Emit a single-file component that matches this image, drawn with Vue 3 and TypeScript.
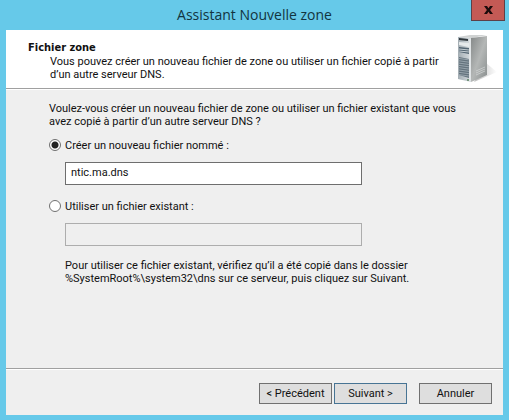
<script setup lang="ts">
import { ref } from 'vue'

type ZoneFileMode = 'new' | 'existing'

const mode = ref<ZoneFileMode>('new')
const newFile = ref<string>('ntic.ma.dns')
const existingFile = ref<string>('')
const vents: number[] = [0, 1, 2, 3, 4, 5, 6, 7]
</script>

<template>
  <main class="window">
    <header class="titlebar">
      <h1 class="title">Assistant Nouvelle zone</h1>
      <button class="close" type="button" aria-label="Fermer">
        <svg width="9" height="8" viewBox="0 0 9 8" aria-hidden="true">
          <path d="M0 0h3l1.5 2.3L6 0h3L6.1 4 9 8H6L4.5 5.7 3 8H0l2.9-4z" fill="#1d0b0b" />
        </svg>
      </button>
    </header>

    <form class="dialog" @submit.prevent>
      <section class="banner">
        <div class="heading">
          <h2>Fichier zone</h2>
          <p>Vous pouvez créer un nouveau fichier de zone ou utiliser un fichier copié à partir<br />d’un autre serveur DNS.</p>
        </div>
        <svg class="server" width="42" height="50" viewBox="0 0 42 50" aria-hidden="true">
          <defs>
            <linearGradient id="side" x1="0" y1="0" x2="1" y2="1">
              <stop offset="0" stop-color="#858989" />
              <stop offset="0.5" stop-color="#b4b7b6" />
              <stop offset="1" stop-color="#888d8d" />
            </linearGradient>
            <linearGradient id="front" x1="0" y1="0" x2="1" y2="0">
              <stop offset="0" stop-color="#a3adb3" />
              <stop offset="1" stop-color="#d7dde0" />
            </linearGradient>
            <linearGradient id="shade" x1="0" y1="0" x2="1" y2="0">
              <stop offset="0" stop-color="#bcbcbc" />
              <stop offset="1" stop-color="#ffffff" />
            </linearGradient>
          </defs>
          <path d="M29 29L40 38 17 48z" fill="url(#shade)" />
          <path d="M1 3L13 1h17L15 4z" fill="#cfd2d2" />
          <path d="M14 4L30 2v39L14 48z" fill="url(#side)" />
          <path d="M1 3l13 1v44L1 45z" fill="url(#front)" />
          <path d="M2 4l9 1v2L2 6z" fill="#30383d" />
          <path d="M2 8l10 1v4L2 11z" fill="#e6eaeb" />
          <path d="M2 13l10 1v6L2 18z" fill="#536572" />
          <path d="M2 15l10 1M2 17l10 1" stroke="#c5ced3" />
          <path d="M2 23l10 2v19L2 41z" fill="#64737d" />
          <path v-for="n in vents" :key="n" :d="`M2 ${24.5 + n * 2.3}l10 1.4`" stroke="#a3b0b8" stroke-width="0.8" />
          <path d="M13 5v42" stroke="#eef0f0" />
          <path d="M19 37l9-4M19 39l9-4M19 41l9-4" stroke="#d6d8d8" stroke-width="0.7" />
          <circle cx="11" cy="46" r="1" fill="#59815f" />
        </svg>
      </section>

      <section class="content">
        <p>Voulez-vous créer un nouveau fichier de zone ou utiliser un fichier existant que vous<br />avez copié à partir d’un autre serveur DNS ?</p>

        <label class="option">
          <input v-model="mode" type="radio" name="mode" value="new" />
          <span>Créer un nouveau fichier nommé :</span>
        </label>
        <input v-model="newFile" class="field" type="text" aria-label="Créer un nouveau fichier nommé" :disabled="mode !== 'new'" />

        <label class="option">
          <input v-model="mode" type="radio" name="mode" value="existing" />
          <span>Utiliser un fichier existant :</span>
        </label>
        <input v-model="existingFile" class="field" type="text" aria-label="Utiliser un fichier existant" :disabled="mode !== 'existing'" />

        <p class="note">Pour utiliser ce fichier existant, vérifiez qu’il a été copié dans le dossier<br />%SystemRoot%\system32\dns sur ce serveur, puis cliquez sur Suivant.</p>
      </section>

      <footer class="actions">
        <button type="button">&lt; Précédent</button>
        <button class="primary" type="submit">Suivant &gt;</button>
        <button class="cancel" type="button">Annuler</button>
      </footer>
    </form>
  </main>
</template>

<style>
body {
  background: #66c9e9;
}
</style>

<style scoped>
.window {
  box-sizing: border-box;
  display: flex;
  flex-direction: column;
  min-height: 100vh;
  padding: 0 6px 5px;
  background: #66c9e9;
  color: #111;
  font-family: Roboto, "Noto Sans", sans-serif;
  font-size: 11px;
  line-height: 13px;
}

h1,
h2,
p {
  margin: 0;
}

.titlebar {
  display: grid;
  grid-template-columns: 1fr auto 1fr;
  align-items: start;
  height: 30px;
}

.title {
  grid-column: 2;
  color: #123440;
  font-family: "Open Sans", "Noto Sans", sans-serif;
  font-size: 14px;
  font-weight: 400;
  line-height: 30px;
}

.close {
  display: flex;
  align-items: center;
  justify-content: center;
  justify-self: end;
  box-sizing: border-box;
  width: 34px;
  height: 21px;
  margin-right: -2px;
  padding: 0;
  border: 1px solid #5d4048;
  border-top: 0;
  background: #c45a55;
}

.dialog {
  display: flex;
  flex: 1;
  flex-direction: column;
  background: #efefef;
}

.banner {
  display: flex;
  justify-content: space-between;
  box-sizing: border-box;
  height: 59px;
  padding: 4px 4px 0 22px;
  border-bottom: 1px solid #a0a0a0;
  background: #fff;
}

.heading {
  padding-top: 7px;
}

.heading h2 {
  font-family: "DejaVu Sans Condensed", "Noto Sans", sans-serif;
  font-size: 11px;
  line-height: 14px;
}

.heading p {
  padding-left: 22px;
  white-space: nowrap;
}

.server {
  flex: none;
}

.content {
  display: flex;
  flex: 1;
  flex-direction: column;
  padding: 12px 43px 0;
  border-top: 1px solid #fff;
  white-space: nowrap;
}

.option {
  display: flex;
  align-items: center;
  align-self: flex-start;
  gap: 4px;
  height: 12px;
  margin-top: 11px;
}

.option input {
  appearance: none;
  box-sizing: border-box;
  width: 12px;
  height: 12px;
  margin: 0;
  border: 1px solid #707070;
  border-radius: 50%;
  background: #fff;
}

.option input:checked {
  background: radial-gradient(circle, #222 0 3px, #fff 4px);
}

.field {
  box-sizing: border-box;
  width: 297px;
  height: 23px;
  margin: 11px 0 4px 16px;
  padding: 0 5px 2px;
  border: 1px solid #6e6e6e;
  border-radius: 0;
  background: #fff;
  color: inherit;
  font: inherit;
}

.field:disabled {
  border-color: #adadad;
  background: #efefef;
}

.note {
  margin-top: 9px;
  padding-left: 16px;
}

.actions {
  display: flex;
  justify-content: flex-end;
  gap: 2px;
  padding: 14px 11px 11px;
  border-top: 1px solid #a0a0a0;
  box-shadow: inset 0 1px #fff;
}

.actions button {
  box-sizing: border-box;
  width: 73px;
  height: 21px;
  padding: 0;
  border: 1px solid #707070;
  background: #dedede;
  color: inherit;
  font: inherit;
}

.actions .primary {
  border-color: #477494;
}

.actions .cancel {
  margin-left: 10px;
}
</style>
